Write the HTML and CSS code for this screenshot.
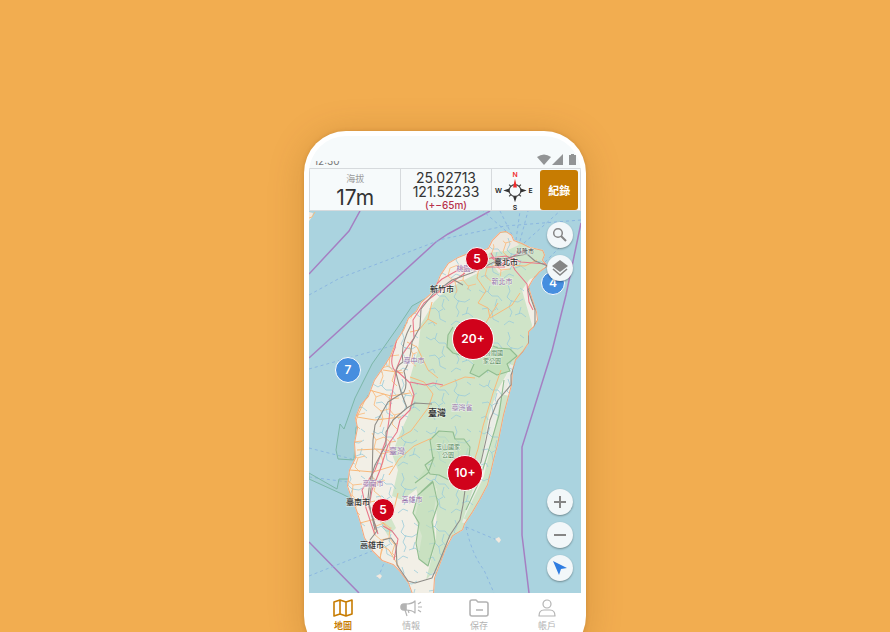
FILE: index.html
```html
<!DOCTYPE html>
<html lang="zh-Hant">
<head>
<meta charset="utf-8">
<meta name="viewport" content="width=device-width, initial-scale=1">
<title>地圖</title>
<link rel="stylesheet" href="styles.css">
</head>
<body>
<main class="stage">
<div class="phone">
<div class="screen">
  <div class="status">
    <span class="clock"><span>12:30</span></span>
    <svg class="status-icons" viewBox="0 0 40 12" aria-hidden="true"><path d="M0 3Q7-2 14 3L7 11Z"/><path d="M15 11L26 0V11Z"/><path d="M32 1H34V0H37V1H39V11H32Z"/></svg>
  </div>
  <header class="readout">
    <div class="cell"><span class="caption">海拔</span><span class="altitude">17m</span></div>
    <div class="cell coords"><span>25.02713</span><span>121.52233</span><span class="error">(+−65m)</span></div>
    <div class="cell">
      <svg class="compass" viewBox="0 0 44 42" role="img" aria-label="指北針">
        <circle cx="22" cy="21" r="6" fill="none" stroke="#444" stroke-width="1.2"/>
        <path d="M18 17l-2-2M26 17l2-2M18 25l-2 2M26 25l2 2" stroke="#444" stroke-width="1.3"/>
        <path d="M10 21L16 19V23ZM34 21L28 19V23ZM22 33L20 27H24Z" fill="#333"/>
        <path d="M22 9L24 18H20Z" fill="#f12a2a"/>
        <g class="compass-text"><text x="22" y="7" fill="#f12a2a">N</text><text x="22" y="41">S</text><text x="5" y="24">W</text><text x="38" y="24">E</text></g>
      </svg>
    </div>
    <div class="action"><button class="record" type="button">紀錄</button></div>
  </header>

  <section class="map" aria-label="臺灣地圖">
    <svg class="map-art" viewBox="309 211 272 382" preserveAspectRatio="xMidYMid slice">
      <defs>
        <path id="island" d="M440 275L448 263L458 257L468 253L479 251L488 248L492 240L500 232L506 231L512 235L514 240L522 243L530 247L543 250L545 255L543 260L548 266L540 272L533 280L529 287L533 300L537 312L538 320L534 327L529 332L529 343L523 352L516 360L513 370L512 385L508 400L504 415L502 425L498 445L494 460L490 477L488 485L480 500L473 512L465 524L463 530L453 536L446 549L440 565L435 578L434 594L412 594L408 583L399 571L393 565L382 561L372 551L364 538L360 523L356 510L350 495L347 486L349 470L355 458L354 443L357 428L355 418L360 405L368 396L374 380L383 367L390 356L396 341L403 330L408 318L416 311L421 302L430 294L436 285Z"/>
        <clipPath id="land"><use href="#island"/></clipPath>
        <pattern id="rivers" width="53" height="47" patternUnits="userSpaceOnUse">
          <path d="M2 8l5 3 3-2 5 5 6 0 4 5M11 10l2-6M20 17l-2 7 3 4M31 3l2 6-3 6 4 4 7 1 5-3M35 18l-3 7 3 5-2 5M5 27l6-1 4 4 1 7 6 3M14 30l5-3M38 33l6-2 5 4M42 32l2-7M27 43l5-4 5 2M47 9l-4-3M4 42l5-2 2 4" fill="none" stroke="#9bcbd9" stroke-width=".8"/>
        </pattern>
        <pattern id="lanes" width="37" height="43" patternUnits="userSpaceOnUse">
          <path d="M2 3l4 7-2 8 7 6 2 8-3 8M6 10l8-3 6 5 9-1M11 24l8-2 5 6 8-2M20 12l-1 10M25 28l-3 9 5 5" fill="none" stroke="#f9bd82" stroke-width=".9"/>
        </pattern>
      </defs>
      <rect x="309" y="211" width="272" height="382" fill="#aad3df"/>

      <g fill="none" stroke="#a57fc2" stroke-width="1.5">
        <path d="M309 274L349 231L360 211M309 358L436 242L448 234L490 211M581 223L566 295L552 351L522 447V535L529 593M309 542L359 593"/>
      </g>
      <g fill="none" stroke="#83aee0" stroke-width=".8" stroke-dasharray="3 3">
        <path d="M309 295L340 278L443 239L505 226L581 220M309 369L395 345M309 448L352 459M309 477L348 482M309 576L372 551M378 578L386 558M466 527L497 540M466 527Q472 555 484 570L494 593M506 231L483 211M512 235L500 211M516 240L520 211M520 241L528 211M524 243L560 211M545 262L572 235"/>
      </g>
      <g fill="#9bcabe" fill-opacity=".2" stroke="#77b3a3" stroke-width=".9">
        <path d="M430 296L412 306L398 327L372 364L355 398L344 429L340 424L336 450L338 459L354 460L356 428L365 400L389 365L405 325Z"/>
        <path d="M309 473L337 489L339 479H348L354 500L342 494L309 479Z"/>
      </g>

      <use href="#island" fill="#f2efe6"/>
      <g clip-path="url(#land)" stroke-linejoin="round">
        <path d="M500 225L550 250L541 275L530 279L522 290L532 325L530 345L508 372L497 391L489 415L480 470L464 528L448 540L440 565L426 580L436 540L437 490L430 473L418 488L402 500L392 496L398 470L392 454L401 431L408 416L413 395L410 378L418 350L421 324L434 302L444 292L462 281L480 272L470 262L488 255Z" fill="#cfe4c8"/>
        <path d="M485 240l10-7 15 0 9 12-13 6-20 2zM436 284l14-10 7 7-12 12zM491 262l24-6 4 8-20 9z" fill="#eee8df"/>
        <path d="M512 365l-6 18-12 35-9 40-8 25-13 40" fill="none" stroke="#e9ede6" stroke-width="4"/>
        <path d="M505 395l-8 40-10 43-20 42" fill="none" stroke="#cfe4c8" stroke-width="7"/>
        <path d="M414 480l18-8 5 20-4 25 3 25-8 24-10-8 4-22-7-19 4-17zM380 522l10-6 6 12-8 8z" fill="#d2e5c9"/>
        <rect x="340" y="225" width="215" height="370" fill="url(#rivers)"/>
        <path d="M436 280L418 305L405 330L417 350L414 400L392 450L380 500L404 558L394 571L340 510L345 400L400 300Z" fill="url(#lanes)"/>
        <path d="M440 275l30-22 40-15 10 25-30 20-50 15z" fill="url(#lanes)"/>
        <g fill="none" stroke="#91bd90" stroke-width="1.1">
          <path d="M453 327l-5 8-1 12 6 6 7 2 14-2 14-9 10 4 12 1 7 7-10 8 3 7-13 4-9-5-9 7-9-4 4-9" fill="#c1dfba"/>
          <path d="M430 440l9-9 14 1 2 7 9 0 6 8-2 19-10 4-9 10-10-5-9-1-5-9 8-6zM415 483l13-10 6-16M421 492l12-11M418 495l-5 18 6 10-3 20 3 16 9 7 7-24-3-20 6-18-5-22z" fill="#c1dfba" fill-opacity=".55"/>
          <path d="M504 380l-5 35-9 31-11 36-13 28"/>
        </g>
        <g fill="none" stroke="#f8b97a" stroke-width="1">
          <path d="M480 263l-3 15 9 13-8 12 10 5 2 10 22-13 8-12M498 303l-16 26M508 265l17 1 12-6M432 302l-4 17-9 11-9 2M428 319l9 5M407 342l10 5 11 23 10 8M410 377l14 5 9 12-5 14-17 23-14 8M440 387l25-10 10 1M432 438l-18 8-15 13-10 16M501 370l-8 23-10 33-5 23-10 30"/>
          <path d="M365 400l-8 17 18 3 26-3M357 450l20-1 16 2M369 390l22 6 19-3M383 370l20 3M350 470l23 2 20-6M360 523l19-5 10 12M373 540l16 10 10 17M356 505l19-4M398 493l-5 20M383 539l-3 21"/>
        </g>
        <use href="#island" fill="none" stroke="#f5a77c" stroke-width="2"/>
        <g fill="none" stroke="#e8788a" stroke-width="1.1">
          <path d="M546 264l-25-2-15-6-15 2-15 5-16 6-18 10-13 12-18 12-5 14-8 13-3 18Q388 364 396 372L391 400L389 420L386 440L375 470L362 490L366 508L375 535"/>
          <path d="M465 273l-20 14-21 16-11 17 1 18-12 17-6 15L410 383L414 395L410 410L400 420L397 432L388 445L380 470L372 490L369 507L378 534M410 382L425 385L433 383L443 385"/>
          <path d="M383 526L392 531L398 539L394 560"/>
          <path d="M510 260l5 10 12 14 2 18 4 8M491 257l10 8 9-7 15-8M499 267l-8-14M472 261l11 6 22 0"/>
        </g>
        <g fill="none" stroke="#8f8d88" stroke-width="1.1">
          <path d="M548 266l-13-5-8-7-11 2-18 4-24 12-22 8-19 14-12 15-1 18-8 15Q410 364 404 371Q408 385 404 392L388 402L375 425L373 440L372 480L369 505L377 531L370 540"/>
          <path d="M411 325Q400 345 403 362Q396 366 396 373L401 392L407 408L393 420L386 432V445L375 465L370 480L368 498L375 530M407 408L415 403L432 404"/>
          <path d="M548 266L536 278L528 290L535 310V326L529 336V345L517 360L511 375V385L498 400L490 420L486 440L481 462L465 490L463 505L460 520L450 535L440 560L432 578L415 583L408 581L397 565L396 545L391 538L383 540M454 280L463 285"/>
        </g>
      </g>
      <path d="M376 576l4-2 2 2-2 3zM495 539l4-2 2 3-2 3zM309 212l4 1-1 4-3 4z" fill="#f2e9df"/>
      <path d="M309 218l3-1 3-5" fill="none" stroke="#f2bd82"/>

      <g class="places">
        <text class="city" x="442" y="292">新竹市</text><text class="city" x="506" y="265">臺北市</text>
        <text class="town" x="525" y="253">基隆市</text><text class="city" x="358" y="505">臺南市</text>
        <text class="city" x="372" y="548">高雄市</text><text class="country" x="437" y="416">臺灣</text>
        <text class="region" x="467" y="271">桃園市</text><text class="region" x="502" y="284">新北市</text>
        <text class="region" x="414" y="363">臺中市</text><text class="region" x="462" y="410">臺灣省</text>
        <text class="region wide" x="397" y="454">臺灣</text><text class="region" x="373" y="486">臺南市</text>
        <text class="region" x="412" y="502">高雄市</text>
        <text class="park" x="491" y="355">太魯閣國</text><text class="park" x="492" y="363">家公園</text>
        <text class="park" x="448" y="449">玉山國家</text><text class="park" x="448" y="457">公園</text>
      </g>
    </svg>

    <button class="pin blue pin-east" type="button">4</button>
    <button class="pin blue pin-west" type="button">7</button>
    <button class="pin small pin-north" type="button">5</button>
    <button class="pin large pin-center" type="button">20+</button>
    <button class="pin medium pin-yushan" type="button">10+</button>
    <button class="pin small pin-south" type="button">5</button>

    <div class="tools tools-top">
      <button class="tool" type="button" aria-label="搜尋"><svg viewBox="0 0 26 26"><circle cx="11" cy="11" r="4.3" fill="none" stroke="#858585" stroke-width="1.5"/><path d="M14 14L19 19" stroke="#858585" stroke-width="2"/></svg></button>
      <button class="tool" type="button" aria-label="圖層"><svg viewBox="0 0 26 26"><path d="M13 5L21 11L13 17L5 11Z" fill="#858585"/><path d="M6 14L13 20L20 14" fill="none" stroke="#858585" stroke-width="1.6"/></svg></button>
    </div>
    <div class="tools tools-bottom">
      <button class="tool" type="button" aria-label="放大"><svg viewBox="0 0 26 26"><path d="M13 7V19M7 13H19" stroke="#858585" stroke-width="2"/></svg></button>
      <button class="tool" type="button" aria-label="縮小"><svg viewBox="0 0 26 26"><path d="M7 13H19" stroke="#858585" stroke-width="2"/></svg></button>
      <button class="tool" type="button" aria-label="定位"><svg viewBox="0 0 26 26"><path d="M6 6L20 13L14 14L12 20Z" fill="#2f7de1"/></svg></button>
    </div>
  </section>

  <nav class="tabs">
    <a class="tab active" href="#map"><svg viewBox="0 0 24 20"><path d="M3 4L9 2L15 4L21 2V16L15 18L9 16L3 18ZM9 2V16M15 4V18"/></svg>地圖</a>
    <a class="tab" href="#news"><svg viewBox="0 0 24 20"><path class="filled" d="M7 6H5Q2 6 2 9T5 12H7Z"/><path class="thin" d="M7 6Q13 6 16 3V15Q13 12 7 12M6 12L8 18M9 12L10 15M19 6L22 4M19 9H23M19 12L22 14"/></svg>情報</a>
    <a class="tab" href="#saved"><svg viewBox="0 0 24 20"><path d="M3 4Q3 2 5 2H9L11 4H19Q21 4 21 6V16Q21 18 19 18H5Q3 18 3 16ZM9 12H16"/></svg>保存</a>
    <a class="tab" href="#account"><svg viewBox="0 0 24 20"><circle class="thin" cx="12" cy="6" r="4"/><path class="thin" d="M4 18Q4 12 9 12H15Q20 12 20 18Z"/></svg>帳戶</a>
  </nav>
</div>
</div>
</main>
</body>
</html>
```
FILE: styles.css
```css
* { box-sizing: border-box; }

body {
  margin: 0;
  background: #f2ad50;
  font-family: Inter, "Noto Sans CJK TC", sans-serif;
}

button {
  padding: 0;
  border: 0;
  font: inherit;
  cursor: pointer;
}

.stage {
  display: flex;
  justify-content: center;
  align-items: flex-start;
  height: 100vh;
  padding-top: 131px;
  overflow: hidden;
}

.phone {
  width: 100%;
  max-width: 282px;
  padding: 5px 5px 24px;
  border-radius: 42px;
  background: #fff;
  box-shadow: 0 4px 36px rgba(120, 70, 0, 0.22), 0 0 4px rgba(120, 70, 0, 0.2);
}

.screen {
  overflow: hidden;
  border-radius: 37px 37px 0 0;
  background: #f6fafb;
}

.status {
  display: flex;
  justify-content: space-between;
  align-items: flex-end;
  height: 32px;
  padding: 0 4px 2px 5px;
}

.clock {
  display: flex;
  align-items: flex-end;
  height: 5px;
  overflow: hidden;
  color: #777;
  font-size: 10px;
  line-height: 10px;
}

.status-icons {
  width: 40px;
  height: 12px;
  fill: #929495;
}

.readout {
  display: grid;
  grid-template-columns: 91fr 91fr 48fr 42fr;
  height: 43px;
  border: 1px solid #d6dadd;
}

.cell {
  display: flex;
  flex-direction: column;
  align-items: center;
  justify-content: center;
  color: #333;
}

.cell + .cell { border-left: 1px solid #d6dadd; }

.caption {
  padding-top: 2px;
  color: #999;
  font-size: 9px;
  line-height: 14px;
}

.altitude {
  font-size: 21px;
  line-height: 24px;
}

.coords {
  padding-top: 2px;
  font-size: 14px;
  line-height: 14px;
}

.error {
  color: #b8324c;
  font-size: 10px;
  font-weight: 500;
  line-height: 12px;
}

.compass {
  width: 44px;
  height: 41px;
}

.compass-text {
  fill: #222;
  font-size: 7px;
  font-weight: 600;
  text-anchor: middle;
}

.action {
  display: flex;
  padding: 1px 2px;
}

.record {
  flex: 1;
  border-radius: 3px;
  background: #c77c02;
  color: #fff;
  font-size: 11px;
  font-weight: 700;
}

.map {
  position: relative;
  height: 382px;
  overflow: hidden;
}

.map-art {
  display: block;
  width: 100%;
  height: 100%;
}

.places {
  text-anchor: middle;
  paint-order: stroke;
  stroke: rgba(255, 255, 255, 0.6);
  stroke-width: 1px;
}

.city { fill: #333; font-size: 8px; font-weight: 500; }
.town { fill: #444; font-size: 6px; }
.country { fill: #333; font-size: 9px; font-weight: 700; }
.region { fill: #946fa9; font-size: 7px; }
.region.wide { font-size: 8px; }
.park { fill: #55865b; font-size: 6px; }

.pin {
  position: absolute;
  width: 24px;
  height: 24px;
  border: 1px solid #fff;
  border-radius: 50%;
  background: #d0021b;
  color: #fff;
  font-size: 12px;
  font-weight: 600;
  line-height: 20px;
  transform: translate(-50%, -50%);
}

.pin.blue { background: #468edf; }
.pin.medium { width: 36px; height: 36px; }
.pin.large { width: 42px; height: 42px; }
.pin-west { width: 26px; height: 26px; }

.pin-east { left: 244px; top: 72px; }
.pin-west { left: 39px; top: 159px; }
.pin-north { left: 168px; top: 48px; }
.pin-center { left: 164px; top: 128px; }
.pin-yushan { left: 156px; top: 262px; }
.pin-south { left: 74px; top: 299px; }

.tools {
  position: absolute;
  right: 8px;
  display: flex;
  flex-direction: column;
  gap: 7px;
}

.tools-top { top: 11px; }
.tools-bottom { bottom: 12px; }

.tool {
  width: 26px;
  height: 26px;
  border-radius: 50%;
  background: #f2f7f9;
  box-shadow: 0 1px 2px rgba(0, 0, 0, 0.35);
}

.tool svg {
  display: block;
  width: 100%;
}

.tabs {
  display: grid;
  grid-template-columns: repeat(4, 1fr);
  background: #fff;
}

.tab {
  display: flex;
  flex-direction: column;
  align-items: center;
  padding-top: 5px;
  color: #b3b3b3;
  font-size: 9px;
  line-height: 16px;
  text-decoration: none;
}

.tab.active {
  color: #c77c02;
  font-weight: 700;
}

.tab svg {
  width: 24px;
  height: 20px;
  fill: none;
  stroke: currentColor;
  stroke-width: 1.6;
  stroke-linejoin: round;
}

.tab .thin { stroke-width: 1.2; }
.tab .filled { fill: currentColor; }
```
